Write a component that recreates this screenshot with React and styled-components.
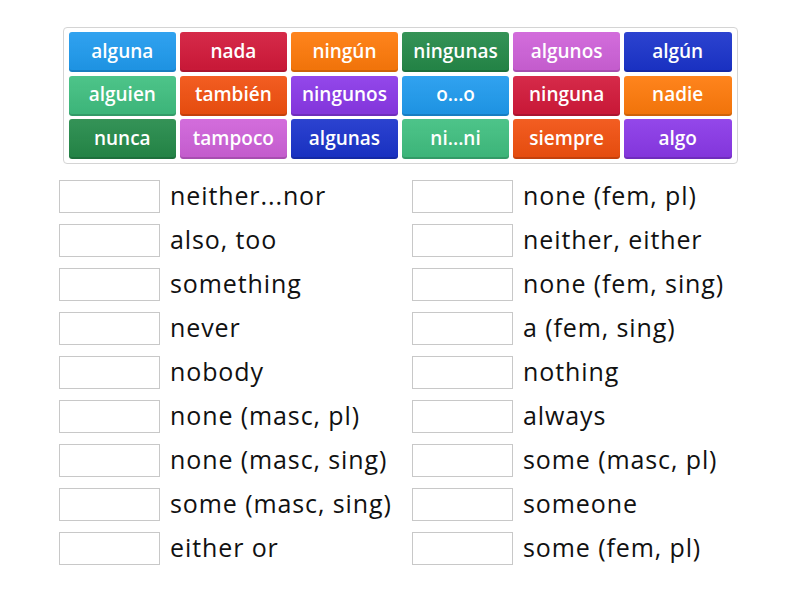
import React from "react";
import styled, { createGlobalStyle } from "styled-components";

const GlobalStyle = createGlobalStyle`
  body {
    margin: 0;
    background: #ffffff;
    font-family: "Open Sans", Lato, sans-serif;
  }
`;

const tiles = [
  ["alguna", "#1f9bef"],
  ["nada", "#d3193a"],
  ["ningún", "#ff7a0a"],
  ["ningunas", "#248a49"],
  ["algunos", "#cf61d9"],
  ["algún", "#1a33cc"],
  ["alguien", "#3fbf80"],
  ["también", "#f2500f"],
  ["ningunos", "#8a38e8"],
  ["o...o", "#1f9bef"],
  ["ninguna", "#d3193a"],
  ["nadie", "#ff7a0a"],
  ["nunca", "#248a49"],
  ["tampoco", "#cf61d9"],
  ["algunas", "#1a33cc"],
  ["ni...ni", "#3fbf80"],
  ["siempre", "#f2500f"],
  ["algo", "#8a38e8"],
];

const left = [
  "neither...nor",
  "also, too",
  "something",
  "never",
  "nobody",
  "none (masc, pl)",
  "none (masc, sing)",
  "some (masc, sing)",
  "either or",
];

const right = [
  "none (fem, pl)",
  "neither, either",
  "none (fem, sing)",
  "a (fem, sing)",
  "nothing",
  "always",
  "some (masc, pl)",
  "someone",
  "some (fem, pl)",
];

const App = () => {
  return (
    <Page>
      <GlobalStyle />
      <Board>
        {tiles.map(([word, color]) => (
          <Tile key={word} $color={color}>
            {word}
          </Tile>
        ))}
      </Board>
      <Answers>
        {[left, right].map((col, i) => (
          <Column key={i}>
            {col.map((label) => (
              <Row key={label}>
                <Slot />
                <Label>{label}</Label>
              </Row>
            ))}
          </Column>
        ))}
      </Answers>
    </Page>
  );
};

export default App;

const Page = styled.div`
  width: 800px;
  height: 600px;
  padding-top: 27px;
  box-sizing: border-box;
`;

const Board = styled.div`
  width: 675px;
  height: 137px;
  margin: 0 auto;
  box-sizing: border-box;
  border: 1px solid #d4d4d4;
  border-radius: 4px;
  padding: 4px 5px;
  display: grid;
  grid-template-columns: repeat(6, 1fr);
  grid-template-rows: repeat(3, 40px);
  gap: 3.5px 3.5px;
`;

const Tile = styled.div`
  display: flex;
  align-items: center;
  justify-content: center;
  border-radius: 3px;
  background: linear-gradient(
      to bottom,
      rgba(255, 255, 255, 0.08),
      rgba(0, 0, 0, 0.06)
    ),
    ${(p) => p.$color};
  box-shadow: inset 0 -2px 0 rgba(0, 0, 0, 0.14);
  color: #ffffff;
  font-size: 19px;
  font-weight: 600;
  padding-bottom: 3px;
`;

const Answers = styled.div`
  margin: 16px 0 0 59px;
  display: grid;
  grid-template-columns: 353px 353px;
`;

const Column = styled.div`
  display: flex;
  flex-direction: column;
  gap: 11px;
`;

const Row = styled.div`
  display: flex;
  align-items: center;
  height: 33px;
`;

const Slot = styled.div`
  width: 101px;
  height: 33px;
  box-sizing: border-box;
  border: 1px solid #c8c8c8;
  flex-shrink: 0;
`;

const Label = styled.span`
  margin-left: 10px;
  font-size: 25px;
  letter-spacing: 0.9px;
  color: #111111;
  white-space: nowrap;
  margin-top: -4px;
`;
